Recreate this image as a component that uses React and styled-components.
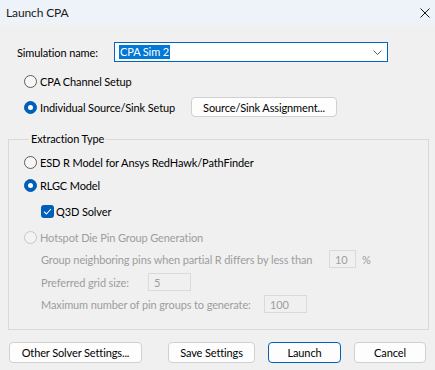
import React from "react";
import styled, { createGlobalStyle } from "styled-components";

const GlobalStyle = createGlobalStyle`
  html, body {
    margin: 0;
    padding: 0;
    background: #f0f0f0;
  }
  body {
    font-family: Lato, "Noto Sans", sans-serif;
    font-size: 11px;
    letter-spacing: -0.12px;
    color: #000;
  }
`;

const Window = styled.div`
  width: 435px;
  height: 370px;
  background: #f0f0f0;
  display: flex;
  flex-direction: column;
  overflow: hidden;
`;

const TitleBar = styled.div`
  height: 25px;
  flex: none;
  display: flex;
  align-items: center;
  justify-content: space-between;
  padding: 0 5px 0 6px;
  background: #eef3f9;
`;

const Title = styled.span`
  font-size: 12px;
  color: #1a1a1a;
`;

const Row = styled.div`
  display: flex;
  align-items: center;
  height: 20px;
  margin-top: ${(p) => p.$top || 0}px;
  padding-left: ${(p) => p.$indent || 0}px;
  color: ${(p) => (p.$disabled ? "#9d9d9d" : "#000")};
  white-space: nowrap;
`;

const Label = styled.span`
  width: ${(p) => (p.$w ? `${p.$w}px` : "auto")};
  flex: none;
  white-space: nowrap;
`;

const Combo = styled.div`
  box-sizing: border-box;
  width: 274px;
  height: 20px;
  flex: none;
  border: 1px solid #0067c0;
  background: #fff;
  display: flex;
  align-items: center;
  justify-content: space-between;
  padding: 0 5px 0 4px;
`;

const Selected = styled.span`
  background: #0078d7;
  color: #fff;
  line-height: 14px;
  padding: 0 1px;
`;

const RadioMark = styled.span`
  box-sizing: border-box;
  width: 13px;
  height: 13px;
  flex: none;
  border-radius: 50%;
  margin-right: 3px;
  display: flex;
  align-items: center;
  justify-content: center;
  border: 1px solid
    ${(p) => (p.$disabled ? "#c6c6c6" : p.$checked ? "#005fb8" : "#5c5c5c")};
  background: ${(p) =>
    p.$checked ? "#005fb8" : p.$disabled ? "#f3f3f3" : "#f7f7f7"};

  &::after {
    content: "";
    width: 5px;
    height: 5px;
    border-radius: 50%;
    background: #fff;
    display: ${(p) => (p.$checked ? "block" : "none")};
  }
`;

const CheckMark = styled.span`
  box-sizing: border-box;
  width: 13px;
  height: 13px;
  flex: none;
  border-radius: 3px;
  margin-right: 2px;
  background: #005fb8;
  display: flex;
  align-items: center;
  justify-content: center;
`;

const Button = styled.button`
  box-sizing: border-box;
  width: ${(p) => p.$w}px;
  height: ${(p) => p.$h || 21}px;
  margin-left: ${(p) => p.$left || 0}px;
  padding: 0;
  flex: none;
  font: inherit;
  letter-spacing: inherit;
  white-space: nowrap;
  color: #000;
  background: #fdfdfd;
  border: 1px solid ${(p) => (p.$default ? "#005fb8" : "#d0d0d0")};
  border-radius: 4px;
`;

const Group = styled.fieldset`
  box-sizing: border-box;
  width: 421px;
  margin: 14px 0 0 8px;
  padding: 0 0 15px 15px;
  border: 1px solid #d9d9d9;
  min-width: 0;
`;

const Legend = styled.legend`
  margin-left: 5px;
  padding: 0 2px;
  line-height: 16px;
  color: #000;
`;

const SmallInput = styled.div`
  box-sizing: border-box;
  width: ${(p) => p.$w}px;
  height: 18px;
  flex: none;
  padding-left: 5px;
  display: flex;
  align-items: center;
  border: 1px solid #dadada;
  background: #f0f0f0;
  color: #9d9d9d;
`;

const Unit = styled.span`
  margin-left: 6px;
`;

const Footer = styled.div`
  display: flex;
  align-items: center;
  margin-top: 12px;
  padding-left: 9px;
`;

function Radio({ checked, disabled, width, children }) {
  return (
    <>
      <RadioMark $checked={checked} $disabled={disabled} />
      <Label $w={width}>{children}</Label>
    </>
  );
}

export default function App() {
  return (
    <Window>
      <GlobalStyle />
      <TitleBar>
        <Title>Launch CPA</Title>
        <svg width="10" height="10" viewBox="0 0 10 10">
          <path d="M0.5 0.5 L9.5 9.5 M9.5 0.5 L0.5 9.5" stroke="#1a1a1a" strokeWidth="1" />
        </svg>
      </TitleBar>

      <Row $top={17} $indent={17}>
        <Label $w={97}>Simulation name:</Label>
        <Combo>
          <Selected>CPA Sim 2</Selected>
          <svg width="9" height="5" viewBox="0 0 9 5">
            <path d="M0.5 0.5 L4.5 4.5 L8.5 0.5" fill="none" stroke="#5c5c5c" strokeWidth="1" />
          </svg>
        </Combo>
      </Row>

      <Row $top={9} $indent={24}>
        <Radio>CPA Channel Setup</Radio>
      </Row>

      <Row $top={6} $indent={24}>
        <Radio checked width={151}>Individual Source/Sink Setup</Radio>
        <Button $w={146} $h={20}>Source/Sink Assignment...</Button>
      </Row>

      <Group>
        <Legend>Extraction Type</Legend>
        <Row $top={5}>
          <Radio>ESD R Model for Ansys RedHawk/PathFinder</Radio>
        </Row>
        <Row $top={3}>
          <Radio checked>RLGC Model</Radio>
        </Row>
        <Row $top={6} $indent={17}>
          <CheckMark>
            <svg width="9" height="7" viewBox="0 0 9 7">
              <path d="M1 3.6 L3.4 6 L8 1" fill="none" stroke="#fff" strokeWidth="1.1" />
            </svg>
          </CheckMark>
          <Label>Q3D Solver</Label>
        </Row>
        <Row $top={6} $disabled>
          <Radio disabled>Hotspot Die Pin Group Generation</Radio>
        </Row>
        <Row $top={2} $indent={17} $disabled>
          <Label $w={288}>Group neighboring pins when partial R differs by less than</Label>
          <SmallInput $w={27}>10</SmallInput>
          <Unit>%</Unit>
        </Row>
        <Row $top={3} $indent={17} $disabled>
          <Label $w={107}>Preferred grid size:</Label>
          <SmallInput $w={43}>5</SmallInput>
        </Row>
        <Row $top={2} $indent={17} $disabled>
          <Label $w={223}>Maximum number of pin groups to generate:</Label>
          <SmallInput $w={43}>100</SmallInput>
        </Row>
      </Group>

      <Footer>
        <Button $w={133}>Other Solver Settings...</Button>
        <Button $w={87} $left={26}>Save Settings</Button>
        <Button $w={73} $left={13} $default>Launch</Button>
        <Button $w={72} $left={13}>Cancel</Button>
      </Footer>
    </Window>
  );
}
